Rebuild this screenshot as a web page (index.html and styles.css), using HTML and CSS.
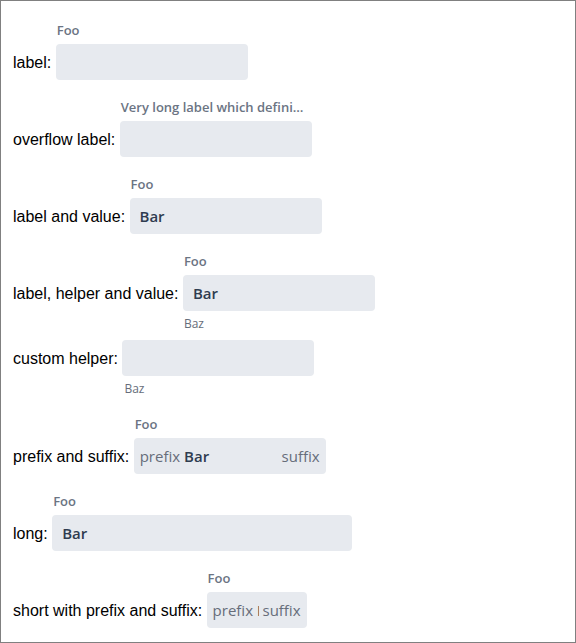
FILE: index.html
```html
<!DOCTYPE html>
<html lang="en">
<head>
<meta charset="utf-8">
<title>Text fields</title>
<link rel="stylesheet" href="styles.css">
</head>
<body>
<main class="page">
  <div class="row"><span class="caption">label: </span>
    <div class="field"><label class="label" for="f1">Foo</label><div class="box"><input id="f1" class="input" type="text"></div></div></div>
  <div class="row"><span class="caption">overflow label: </span>
    <div class="field"><label class="label" for="f2">Very long label which definitely overflows</label><div class="box"><input id="f2" class="input" type="text"></div></div></div>
  <div class="row"><span class="caption">label and value: </span>
    <div class="field"><label class="label" for="f3">Foo</label><div class="box"><input id="f3" class="input" type="text" value="Bar"></div></div></div>
  <div class="row"><span class="caption">label, helper and value: </span>
    <div class="field"><label class="label" for="f4">Foo</label><div class="box"><input id="f4" class="input" type="text" value="Bar" aria-describedby="h4"></div><div class="helper" id="h4">Baz</div></div></div>
  <div class="row row-unlabelled"><label class="caption" for="f5">custom helper: </label>
    <div class="field"><div class="box"><input id="f5" class="input" type="text" aria-describedby="h5"></div><div class="helper" id="h5">Baz</div></div></div>
  <div class="row"><span class="caption">prefix and suffix: </span>
    <div class="field"><label class="label" for="f6">Foo</label><div class="box"><span class="affix">prefix</span><input id="f6" class="input" type="text" value="Bar"><span class="affix">suffix</span></div></div></div>
  <div class="row"><span class="caption">long: </span>
    <div class="field field-long"><label class="label" for="f7">Foo</label><div class="box"><input id="f7" class="input" type="text" value="Bar"></div></div></div>
  <div class="row"><span class="caption">short with prefix and suffix: </span>
    <div class="field field-short"><label class="label" for="f8">Foo</label><div class="box"><span class="affix">prefix</span><input id="f8" class="input" type="text" value="Bar"><span class="affix">suffix</span></div></div></div>
</main>
</body>
</html>
```

FILE: styles.css
```css
* { box-sizing: border-box; }
body { margin: 0; background: #fff; }
.page {
  min-height: 100vh;
  padding: 2px 12px 12px;
  border: 1px solid #808080;
  font: 16px/20px "Liberation Sans", Arial, sans-serif;
  color: #000;
}
.row { display: flex; align-items: flex-start; }
.caption { flex: none; padding-top: 50px; white-space: pre; }
.row-unlabelled { padding-top: 8px; }
.row-unlabelled .caption { padding-top: 9px; }
.field {
  width: 192px;
  display: flex;
  flex-direction: column;
  font-family: "Open Sans", "Noto Sans", sans-serif;
}
.field-long { width: 300px; }
.field-short { width: 100px; }
.label {
  padding: 17px 6px 4px 1px;
  font-size: 13px;
  line-height: 20px;
  font-weight: 600;
  color: #6b7483;
  white-space: nowrap;
  overflow: hidden;
  text-overflow: ellipsis;
}
.box {
  display: flex;
  align-items: center;
  height: 36px;
  padding: 0 6px;
  border-radius: 4px;
  background: #e7eaef;
}
.input {
  flex: 1;
  min-width: 0;
  width: 100%;
  height: 36px;
  padding: 0 4px;
  border: 0;
  outline: 0;
  background: transparent;
  font: 600 15px/36px "Open Sans", "Noto Sans", sans-serif;
  color: #2f3c50;
}
.affix { font-size: 15px; color: #666d7a; }
.helper { padding: 5px 1px 0; font-size: 12px; line-height: 16px; color: #666d7a; }
.row-unlabelled .helper { padding-left: 2px; }
```
